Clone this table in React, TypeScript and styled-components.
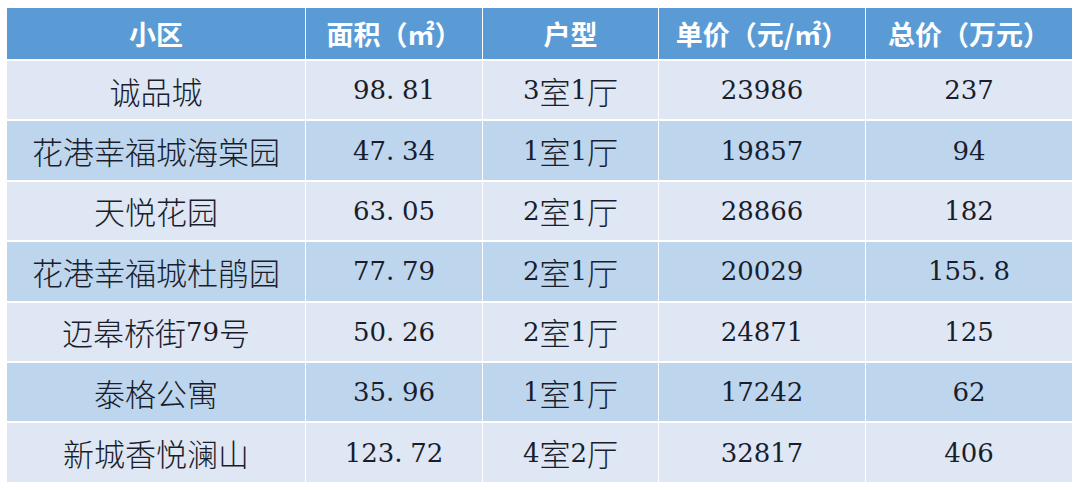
import React from "react";
import styled, { createGlobalStyle } from "styled-components";

const GlobalStyle = createGlobalStyle`
  html, body { margin: 0; padding: 0; background: #ffffff; }
  body { font-family: "Noto Sans CJK SC", sans-serif; }
`;

const Page = styled.div`
  padding: 8px 0 0 7px;
  width: 1080px;
  height: 490px;
  box-sizing: border-box;
  background: #ffffff;
`;

const Table = styled.div`
  display: grid;
  width: 1065px;
  grid-template-columns: 298px 176px 175px 206px 206px;
  grid-template-rows: 51px;
  grid-auto-rows: 58.4px;
  column-gap: 1px;
  row-gap: 2px;
`;

const HeadCell = styled.div`
  display: flex;
  align-items: center;
  justify-content: center;
  background: #5b9bd5;
  color: #ffffff;
  font-family: "Noto Sans CJK SC", sans-serif;
  font-weight: 700;
  font-size: 27px;
  white-space: nowrap;
`;

const Cell = styled.div<{ $even: boolean }>`
  display: flex;
  align-items: center;
  justify-content: center;
  background: ${(p) => (p.$even ? "#bdd6ee" : "#dee7f3")};
  color: #1a1d2b;
  font-size: 31px;
  white-space: nowrap;
`;

const Num = styled.span`
  font-family: "DejaVu Serif", "Liberation Serif", serif;
  font-size: 26px;
  font-weight: 400;
`;

const Dot = styled.span`
  display: inline-block;
  width: 16px;
  font-family: "DejaVu Serif", "Liberation Serif", serif;
  font-size: 26px;
`;

const Han = styled.span`
  font-family: "Noto Sans CJK SC", sans-serif;
  font-weight: 300;
  font-size: 31px;
`;

const headers = ["小区", "面积（㎡）", "户型", "单价（元/㎡）", "总价（万元）"];

const rows: string[][] = [
  ["诚品城", "98.81", "3室1厅", "23986", "237"],
  ["花港幸福城海棠园", "47.34", "1室1厅", "19857", "94"],
  ["天悦花园", "63.05", "2室1厅", "28866", "182"],
  ["花港幸福城杜鹃园", "77.79", "2室1厅", "20029", "155.8"],
  ["迈皋桥街79号", "50.26", "2室1厅", "24871", "125"],
  ["泰格公寓", "35.96", "1室1厅", "17242", "62"],
  ["新城香悦澜山", "123.72", "4室2厅", "32817", "406"],
];

function renderText(text: string) {
  const parts = text.match(/[0-9]+|\.|[^0-9.]+/g) || [];
  return parts.map((p, i) => {
    if (p === ".") return <Dot key={i}>.</Dot>;
    if (/^[0-9]+$/.test(p)) return <Num key={i}>{p}</Num>;
    return <Han key={i}>{p}</Han>;
  });
}

export default function App() {
  return (
    <>
      <GlobalStyle />
      <Page>
        <Table>
          {headers.map((h) => (
            <HeadCell key={h}>{h}</HeadCell>
          ))}
          {rows.map((r, ri) =>
            r.map((c, ci) => (
              <Cell key={`${ri}-${ci}`} $even={ri % 2 === 1}>
                {renderText(c)}
              </Cell>
            ))
          )}
        </Table>
      </Page>
    </>
  );
}
